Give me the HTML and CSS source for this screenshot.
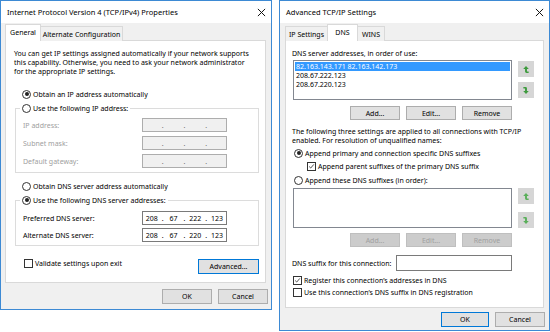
FILE: index.html
```html
<!DOCTYPE html>
<html lang="en">
<head>
  <meta charset="UTF-8" />
  <title>TCP/IPv4 Properties</title>
  <link rel="stylesheet" href="styles.css">
</head>
<body>
  <div class="desktop">

    <!-- Okno: Internet Protocol Version 4 -->
    <section class="window win-ipv4">
      <header class="titlebar">
        <span class="title">Internet Protocol Version 4 (TCP/IPv4) Properties</span>
        <svg class="close" viewBox="0 0 10 10"><path d="M1 1L9 9M9 1L1 9"/></svg>
      </header>
      <div class="window-body">
        <div class="tabs">
          <span class="tab active tab-general">General</span>
          <span class="tab tab-alternate">Alternate Configuration</span>
        </div>
        <div class="tab-panel">
          <p class="intro">You can get IP settings assigned automatically if your network supports<br>this capability. Otherwise, you need to ask your network administrator<br>for the appropriate IP settings.</p>

          <label class="option opt-auto-ip"><span class="radio checked"></span>Obtain an IP address automatically</label>

          <fieldset class="group group-ip">
            <legend><span class="radio"></span>Use the following IP address:</legend>
            <div class="field disabled"><span class="field-label">IP address:</span><span class="ip-box"><i></i><b>.</b><i></i><b>.</b><i></i><b>.</b><i></i></span></div>
            <div class="field disabled"><span class="field-label">Subnet mask:</span><span class="ip-box"><i></i><b>.</b><i></i><b>.</b><i></i><b>.</b><i></i></span></div>
            <div class="field disabled"><span class="field-label">Default gateway:</span><span class="ip-box"><i></i><b>.</b><i></i><b>.</b><i></i><b>.</b><i></i></span></div>
          </fieldset>

          <label class="option opt-auto-dns"><span class="radio"></span>Obtain DNS server address automatically</label>

          <fieldset class="group group-dns">
            <legend><span class="radio checked"></span>Use the following DNS server addresses:</legend>
            <div class="field"><span class="field-label">Preferred DNS server:</span><span class="ip-box"><i>208</i><b>.</b><i>67</i><b>.</b><i>222</i><b>.</b><i>123</i></span></div>
            <div class="field"><span class="field-label">Alternate DNS server:</span><span class="ip-box"><i>208</i><b>.</b><i>67</i><b>.</b><i>220</i><b>.</b><i>123</i></span></div>
          </fieldset>

          <div class="panel-footer">
            <label class="option opt-validate"><span class="checkbox"></span>Validate settings upon exit</label>
            <button class="btn btn-advanced default">Advanced...</button>
          </div>
        </div>
        <div class="dialog-buttons">
          <button class="btn">OK</button>
          <button class="btn">Cancel</button>
        </div>
      </div>
    </section>

    <!-- Okno: Advanced TCP/IP Settings -->
    <section class="window win-advanced">
      <header class="titlebar">
        <span class="title">Advanced TCP/IP Settings</span>
        <svg class="close" viewBox="0 0 10 10"><path d="M1 1L9 9M9 1L1 9"/></svg>
      </header>
      <div class="window-body">
        <div class="tabs">
          <span class="tab tab-ip">IP Settings</span>
          <span class="tab active tab-dns">DNS</span>
          <span class="tab tab-wins">WINS</span>
        </div>
        <div class="tab-panel">
          <p class="caption">DNS server addresses, in order of use:</p>
          <div class="list-row list-servers">
            <ul class="listbox">
              <li class="selected">82.163.143.171 82.163.142.173</li>
              <li>208.67.222.123</li>
              <li>208.67.220.123</li>
            </ul>
            <div class="move-buttons">
              <span class="move-btn"><svg viewBox="0 0 10 10"><path d="M5 0.5L1.5 4.5H3.8V7.6Q3.8 9.3 5.6 9.3H8.3V7.6H6.2V4.5H8.5Z"/></svg></span>
              <span class="move-btn"><svg viewBox="0 0 10 10"><path d="M5 9.5L8.5 5.5H6.2V2.4Q6.2 0.7 4.4 0.7H1.7V2.4H3.8V5.5H1.5Z"/></svg></span>
            </div>
          </div>
          <div class="list-actions">
            <button class="btn">Add...</button>
            <button class="btn">Edit...</button>
            <button class="btn">Remove</button>
          </div>

          <p class="caption note">The following three settings are applied to all connections with TCP/IP<br>enabled. For resolution of unqualified names:</p>
          <label class="option opt-primary"><span class="radio checked"></span>Append primary and connection specific DNS suffixes</label>
          <label class="option opt-parent"><span class="checkbox checked"><svg viewBox="0 0 9 9"><path d="M1.5 4.5L3.5 6.5L7.5 1.8"/></svg></span>Append parent suffixes of the primary DNS suffix</label>
          <label class="option opt-these"><span class="radio"></span>Append these DNS suffixes (in order):</label>

          <div class="list-row list-suffixes">
            <ul class="listbox"></ul>
            <div class="move-buttons">
              <span class="move-btn"><svg viewBox="0 0 10 10"><path d="M5 0.5L1.5 4.5H3.8V7.6Q3.8 9.3 5.6 9.3H8.3V7.6H6.2V4.5H8.5Z"/></svg></span>
              <span class="move-btn"><svg viewBox="0 0 10 10"><path d="M5 9.5L8.5 5.5H6.2V2.4Q6.2 0.7 4.4 0.7H1.7V2.4H3.8V5.5H1.5Z"/></svg></span>
            </div>
          </div>
          <div class="list-actions">
            <button class="btn" disabled>Add...</button>
            <button class="btn" disabled>Edit...</button>
            <button class="btn" disabled>Remove</button>
          </div>

          <div class="suffix-row">
            <span>DNS suffix for this connection:</span>
            <span class="textbox"></span>
          </div>
          <label class="option opt-register"><span class="checkbox checked"><svg viewBox="0 0 9 9"><path d="M1.5 4.5L3.5 6.5L7.5 1.8"/></svg></span>Register this connection’s addresses in DNS</label>
          <label class="option opt-use"><span class="checkbox"></span>Use this connection’s DNS suffix in DNS registration</label>
        </div>
        <div class="dialog-buttons">
          <button class="btn default">OK</button>
          <button class="btn">Cancel</button>
        </div>
      </div>
    </section>

  </div>
</body>
</html>
```

FILE: styles.css
```css
:root {
  --accent: #3d8ad4;
  --face: #f0f0f0;
  --panel-border: #d9d9d9;
  --btn: #e1e1e1;
  --btn-border: #adadad;
  --disabled: #a0a0a0;
  --ui-size: 7px;
}

* {
  margin: 0;
  padding: 0;
  box-sizing: border-box;
}

html, body {
  width: 550px;
  height: 332px;
  background: #ffffff;
}

body {
  font-family: 'Noto Sans', sans-serif;
  font-size: var(--ui-size);
  line-height: 9px;
  color: #000;
  white-space: nowrap;
}

.desktop {
  display: flex;
  align-items: flex-start;
  gap: 7px;
}

/* Ramka okna */
.window {
  display: flex;
  flex-direction: column;
  border: 1px solid var(--accent);
  background: var(--face);
}

.win-ipv4 {
  width: 272px;
  height: 310px;
}

.win-advanced {
  width: 271px;
  height: 331px;
}

.titlebar {
  height: 22px;
  flex: none;
  display: flex;
  align-items: center;
  justify-content: space-between;
  padding: 0 5px 0 6px;
  background: #fff;
  font-size: 7.5px;
}

.close {
  width: 9px;
  height: 9px;
  stroke: #111;
  stroke-width: 1.1;
  fill: none;
}

.window-body {
  flex: 1;
  display: flex;
  flex-direction: column;
  padding-top: 1px;
}

.win-ipv4 .window-body {
  padding-bottom: 5px;
}

.win-advanced .window-body {
  padding-bottom: 3px;
}

/* Zakladki */
.tabs {
  display: flex;
  align-items: flex-end;
  height: 17px;
  margin-bottom: -1px;
  position: relative;
  z-index: 1;
}

.win-ipv4 .tabs,
.win-ipv4 .tab-panel {
  margin-left: 4px;
  margin-right: 5px;
}

.win-advanced .tabs,
.win-advanced .tab-panel {
  margin-left: 5px;
  margin-right: 5px;
}

.tab {
  height: 15px;
  display: flex;
  align-items: center;
  justify-content: center;
  border: 1px solid var(--panel-border);
  border-bottom: none;
  background: var(--face);
  margin-right: -1px;
}

.tab.active {
  height: 17px;
  background: #fff;
  padding-bottom: 2px;
}

.tab-general { width: 36px; }
.tab-alternate { width: 83px; }
.tab-ip { width: 43px; }
.tab-dns { width: 31px; }
.tab-wins { width: 28px; }

.tab-panel {
  flex: 1;
  display: flex;
  flex-direction: column;
  background: #fff;
  border: 1px solid var(--panel-border);
}

.win-ipv4 .tab-panel {
  padding: 8px 6px 0 8px;
}

.win-advanced .tab-panel {
  padding: 8px 6px 0 6px;
}

/* Kontrolki */
.option {
  display: flex;
  align-items: center;
  height: 10px;
  gap: 2px;
}

.radio,
.checkbox {
  flex: none;
  width: 9px;
  height: 9px;
  border: 1px solid #333;
  background: #fff;
  display: flex;
  align-items: center;
  justify-content: center;
}

.radio {
  border-radius: 50%;
}

.radio.checked::after {
  content: "";
  width: 4px;
  height: 4px;
  border-radius: 50%;
  background: #222;
}

.checkbox svg {
  width: 9px;
  height: 9px;
  stroke: #222;
  stroke-width: 1;
  fill: none;
}

.group {
  border: 1px solid #dcdcdc;
  margin-left: 1px;
  padding: 5px 7px 4px;
  display: flex;
  flex-direction: column;
  gap: 4px;
}

.group legend {
  display: flex;
  align-items: center;
  gap: 2px;
  height: 10px;
  padding: 0 2px;
  margin-left: -3px;
}

.field {
  display: flex;
  align-items: center;
  height: 14px;
}

.field-label {
  width: 119px;
}

.field.disabled .field-label {
  color: var(--disabled);
}

.ip-box {
  width: 85px;
  height: 14px;
  display: flex;
  align-items: center;
  border: 1px solid #7a7a7a;
  background: #fff;
}

.ip-box i {
  flex: 1;
  font-style: normal;
  text-align: center;
}

.ip-box b {
  width: 4px;
  font-weight: normal;
  text-align: center;
}

.field.disabled .ip-box {
  border-color: #adadad;
  background: var(--face);
  color: #6d6d6d;
}

.opt-auto-ip {
  margin-top: 13px;
  margin-left: 8px;
}

.group-ip {
  margin-top: 4px;
}

.opt-auto-dns {
  margin-top: 8px;
  margin-left: 8px;
}

.group-dns {
  margin-top: 4px;
  padding: 6px 7px 3px;
  gap: 3px;
}

.panel-footer {
  display: flex;
  justify-content: space-between;
  align-items: flex-start;
  margin-top: 11px;
}

.opt-validate {
  margin-top: 1px;
  margin-left: 10px;
}

/* Przyciski */
.btn {
  font: inherit;
  color: #000;
  height: 15px;
  width: 50px;
  background: var(--btn);
  border: 1px solid var(--btn-border);
  line-height: 9px;
}

.btn.default {
  border-color: #0078d7;
}

.btn:disabled {
  background: #cccccc;
  border-color: #bfbfbf;
  color: var(--disabled);
}

.btn-advanced {
  width: 61px;
  margin-top: 2px;
}

.dialog-buttons {
  display: flex;
  justify-content: flex-end;
  gap: 6px;
  height: 15px;
}

.win-ipv4 .dialog-buttons {
  margin: 6px 3px 0 0;
}

.win-advanced .dialog-buttons {
  margin: 4px 4px 0 0;
}

.win-advanced .dialog-buttons .btn:first-child {
  width: 48px;
}

/* Zakladka DNS */
.list-row {
  display: flex;
  align-items: flex-start;
  margin-left: 1px;
  margin-top: 2px;
}

.listbox {
  list-style: none;
  width: 219px;
  height: 40px;
  border: 1px solid #828790;
  background: #fff;
  padding: 1px 1px 0;
}

.listbox li {
  height: 9px;
  padding-left: 1px;
}

.listbox li.selected {
  background: #3399ff;
  color: #fff;
}

.move-buttons {
  display: flex;
  flex-direction: column;
  gap: 5px;
  margin: 1px 0 0 6px;
}

.move-btn {
  width: 16px;
  height: 16px;
  display: flex;
  align-items: center;
  justify-content: center;
  background: #d6d6d6;
}

.move-btn svg {
  width: 8px;
  height: 9px;
  fill: #3e9b3e;
}

.list-suffixes {
  margin-top: 3px;
}

.list-suffixes .move-buttons {
  margin-top: 0;
  gap: 8px;
}

.list-suffixes .move-btn svg {
  fill: #5aaf5a;
}

.list-actions {
  display: flex;
  justify-content: flex-end;
  gap: 6px;
  width: 219px;
  margin: 6px 0 0 1px;
}

.list-actions .btn {
  height: 14px;
}

.list-suffixes + .list-actions {
  margin-top: 5px;
}

.note {
  margin-top: 7px;
}

.opt-primary {
  margin-top: 3px;
  margin-left: 2px;
}

.opt-parent {
  margin-top: 3px;
  margin-left: 15px;
}

.opt-these {
  margin-top: 4px;
  margin-left: 2px;
}

.suffix-row {
  display: flex;
  align-items: center;
  justify-content: space-between;
  width: 220px;
  margin-top: 8px;
}

.textbox {
  width: 116px;
  height: 16px;
  border: 1px solid #7a7a7a;
  background: #fff;
}

.opt-register {
  margin-top: 4px;
  margin-left: 1px;
}

.opt-use {
  margin-top: 2px;
  margin-left: 1px;
}
```
